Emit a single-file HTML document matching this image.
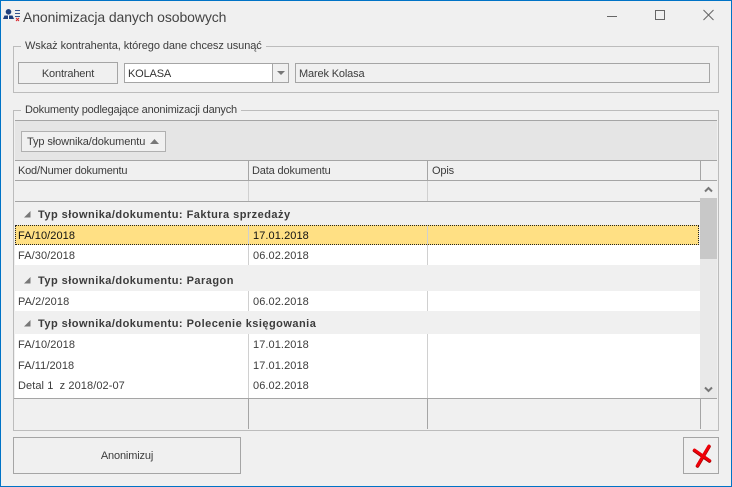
<!DOCTYPE html>
<html><head><meta charset="utf-8"><style>
html,body{margin:0;padding:0;background:#f0f0f0}
#w{position:relative;width:732px;height:487px;overflow:hidden;background:#f0f0f0;font:11px/14px "Liberation Sans",sans-serif;letter-spacing:-.15px;color:#3c3c3c}
#w div{position:absolute;box-sizing:border-box}
.t{white-space:nowrap;height:14px;margin-top:1px}
.n{letter-spacing:.08px}
.b{font-weight:bold;letter-spacing:.47px}
.g{border:1px solid #bcbcbc}
.l{background:#f0f0f0;padding:0 4px}
.btn{border:1px solid #a5a5a5;background:#f0f0f0;text-align:center}
.hl{background:#a5a5a5;height:1px}
.vl{background:#a5a5a5;width:1px}
.vc{background:#d0d0d0;width:1px}
.wh{background:#fff;left:15px;width:685px}
</style></head><body><div id="w">
<div style="left:0;top:0;width:732px;height:487px;border:1px solid #0073c6"></div>
<svg style="position:absolute;left:3px;top:9px" width="17" height="13" viewBox="0 0 17 13">
<circle cx="5.500" cy="2.800" r="2.800" fill="#1f3f7e"/><path d="M0 10l1.500-3.500h8L11 10z" fill="#1f3f7e"/><path d="M5 6.500h1v3.500H5z" fill="#fff"/>
<path d="M12 1.500h5M12 4.500h5M12 7.500h5" stroke="#35558e" stroke-width="1"/><path d="M13 9l3 3M16 9l-3 3" stroke="#d8262c" stroke-width="1"/></svg>
<div class="t" style="left:23px;top:8px;font-size:14px;line-height:17px;height:17px;letter-spacing:-.1px;color:#444">Anonimizacja danych osobowych</div>
<svg style="position:absolute;left:606px;top:8px" width="124" height="16" viewBox="0 0 124 16" fill="none" stroke="#666">
<path d="M1 8.500h10"/><path d="M49.500 2.500h9v9h-9z"/><path d="M97.500 2l10 10M107.500 2l-10 10"/></svg>

<div class="g" style="left:13px;top:46px;width:706px;height:47px"></div>
<div class="t l" style="left:21px;top:38px;letter-spacing:-.08px">Wskaż kontrahenta, którego dane chcesz usunąć</div>
<div class="btn" style="left:18px;top:62px;width:100px;height:22px;line-height:22px">Kontrahent</div>
<div style="left:124px;top:63px;width:165px;height:20px;border:1px solid #a5a5a5;background:#fff;padding-left:3px;line-height:20px;color:#333">KOLASA</div>
<div style="left:272px;top:64px;width:16px;height:18px;background:#f0f0f0;border-left:1px solid #a5a5a5"></div>
<svg style="position:absolute;left:277px;top:71px" width="9" height="5"><path d="M0 0h8l-4 4z" fill="#777"/></svg>
<div style="left:295px;top:63px;width:415px;height:20px;border:1px solid #a5a5a5;padding-left:3px;line-height:20px">Marek Kolasa</div>

<div class="g" style="left:13px;top:110px;width:706px;height:321px"></div>
<div class="t l" style="left:21px;top:102px;letter-spacing:-.2px">Dokumenty podlegające anonimizacji danych</div>
<div style="left:15px;top:120px;width:702px;height:41px;background:#e5e5e5;border-top:1px solid #a5a5a5"></div>
<div style="left:21px;top:131px;width:145px;height:21px;border:1px solid #b0b0b0;background:#f0f0f0;padding-left:5px;line-height:21px;white-space:nowrap;letter-spacing:-.1px">Typ słownika/dokumentu</div>
<svg style="position:absolute;left:150px;top:139px" width="10" height="6"><path d="M0 5L4.500 0 9 5z" fill="#777"/></svg>

<div class="hl" style="left:15px;top:160px;width:702px"></div>
<div class="hl" style="left:15px;top:180px;width:702px"></div>
<div class="vl" style="left:248px;top:160px;height:20px"></div>
<div class="vl" style="left:427px;top:160px;height:20px"></div>
<div class="vl" style="left:700px;top:160px;height:20px"></div>
<div class="t" style="left:18px;top:163px;letter-spacing:-.2px">Kod/Numer dokumentu</div>
<div class="t" style="left:252px;top:163px">Data dokumentu</div>
<div class="t" style="left:432px;top:163px">Opis</div>
<div class="vc" style="left:248px;top:181px;height:20px"></div>
<div class="vc" style="left:427px;top:181px;height:20px"></div>
<div class="hl" style="left:15px;top:201px;width:685px"></div>

<div class="t b" style="left:38px;top:207px">Typ słownika/dokumentu: Faktura sprzedaży</div>
<svg style="position:absolute;left:24px;top:211px" width="8" height="7"><path d="M0 6.500L6.500 0v6.500z" fill="#777"/></svg>

<div style="left:15px;top:225px;width:684px;height:20px;background:#ffe084;border:1px dotted #222"></div>
<div class="vc" style="left:248px;top:226px;height:18px"></div>
<div class="vc" style="left:427px;top:226px;height:18px"></div>
<div class="t n" style="left:18px;top:228px;color:#111">FA/10/2018</div>
<div class="t n" style="left:253px;top:228px;color:#111">17.01.2018</div>

<div class="wh" style="top:245px;height:20px"></div>
<div class="vc" style="left:248px;top:245px;height:20px"></div>
<div class="vc" style="left:427px;top:245px;height:20px"></div>
<div class="t n" style="left:18px;top:248px">FA/30/2018</div>
<div class="t n" style="left:253px;top:248px">06.02.2018</div>

<div class="t b" style="left:38px;top:273px">Typ słownika/dokumentu: Paragon</div>
<svg style="position:absolute;left:24px;top:277px" width="8" height="7"><path d="M0 6.500L6.500 0v6.500z" fill="#777"/></svg>

<div class="wh" style="top:291px;height:20px"></div>
<div class="vc" style="left:248px;top:291px;height:20px"></div>
<div class="vc" style="left:427px;top:291px;height:20px"></div>
<div class="t n" style="left:18px;top:294px">PA/2/2018</div>
<div class="t n" style="left:253px;top:294px">06.02.2018</div>

<div class="t b" style="left:38px;top:316px">Typ słownika/dokumentu: Polecenie księgowania</div>
<svg style="position:absolute;left:24px;top:320px" width="8" height="7"><path d="M0 6.500L6.500 0v6.500z" fill="#777"/></svg>

<div class="wh" style="top:334px;height:64px"></div>
<div class="vc" style="left:248px;top:334px;height:64px"></div>
<div class="vc" style="left:427px;top:334px;height:64px"></div>
<div class="t n" style="left:18px;top:337px">FA/10/2018</div>
<div class="t n" style="left:253px;top:337px">17.01.2018</div>
<div class="t n" style="left:18px;top:358px">FA/11/2018</div>
<div class="t n" style="left:253px;top:358px">17.01.2018</div>
<div class="t n" style="left:18px;top:378px;white-space:pre">Detal 1  z 2018/02-07</div>
<div class="t n" style="left:253px;top:378px">06.02.2018</div>

<div style="left:700px;top:181px;width:17px;height:217px;background:#e9e9e9"></div>
<div style="left:700px;top:181px;width:17px;height:17px;background:#f0f0f0"></div>
<div style="left:700px;top:198px;width:17px;height:61px;background:#c8c8c8"></div>
<svg style="position:absolute;left:704px;top:186px" width="9" height="7" fill="none" stroke="#777" stroke-width="2"><path d="M1 5.500l3.500-3.500 3.500 3.500"/></svg>
<svg style="position:absolute;left:704px;top:386px" width="9" height="7" fill="none" stroke="#777" stroke-width="2"><path d="M1 1.500l3.500 3.500 3.500-3.500"/></svg>

<div class="hl" style="left:14px;top:398px;width:703px"></div>
<div class="vl" style="left:248px;top:399px;height:30px"></div>
<div class="vl" style="left:427px;top:399px;height:30px"></div>
<div class="vl" style="left:700px;top:399px;height:30px"></div>

<div class="btn" style="left:13px;top:437px;width:228px;height:37px;line-height:37px">Anonimizuj</div>
<div class="btn" style="left:683px;top:437px;width:36px;height:37px"></div>
<svg style="position:absolute;left:690px;top:442px" width="24" height="26" viewBox="0 0 24 26" fill="none" stroke-linecap="round">
<path d="M4.500 8.500L19.500 19M19 4.500L7.500 24" stroke="#a00000" stroke-width="3.600"/>
<path d="M4.500 8L19.500 18.500M19 4L7.500 23.500" stroke="#f00008" stroke-width="2.800"/></svg>
</div></body></html>
